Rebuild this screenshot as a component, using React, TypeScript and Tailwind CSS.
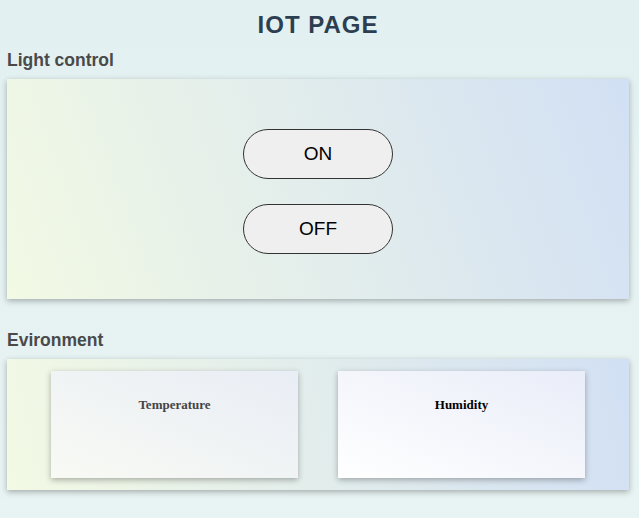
import React from 'react';

const sans = { fontFamily: '"Liberation Sans", Arial, sans-serif' };

function PillButton({ label }: { label: string }) {
  return (
    <button className="w-[150px] h-[50px] rounded-full border border-[#333] bg-[#efefef] text-[19px] text-black font-['Liberation_Sans',Arial,sans-serif]">
      {label}
    </button>
  );
}

function SensorCard({ title, color, bg }: { title: string; color: string; bg: string }) {
  return (
    <div className={`w-[247px] h-[107px] shadow-[0_2px_6px_rgba(0,0,0,0.3)] pt-[26px] text-center ${bg}`}>
      <div className={`text-[13px] leading-[16px] font-bold font-['Liberation_Serif','Times_New_Roman',serif] ${color}`}>{title}</div>
    </div>
  );
}

export default function App() {
  return (
    <div className="min-h-[518px] bg-gradient-to-b from-[#e3f0f1] to-[#e8f4f3] pl-[7px] pr-[10px] pt-[10px] pb-[28px]" style={sans}>
      <h1 className="text-center text-[24px] leading-[30px] font-bold text-[#2c3e50] tracking-[1px]">IOT PAGE</h1>

      <h2 className="mt-[10px] text-[17.5px] leading-[20px] font-bold text-[#4a4a4a]">Light control</h2>
      <div className="mt-[9px] h-[220px] bg-[linear-gradient(70deg,#f2f9e4,#d2e0f4)] shadow-[0_2px_6px_rgba(0,0,0,0.3)] flex flex-col items-center pt-[50px] gap-[25px]">
        <PillButton label="ON" />
        <PillButton label="OFF" />
      </div>

      <h2 className="mt-[31px] text-[17.5px] leading-[20px] font-bold text-[#4a4a4a]">Evironment</h2>
      <div className="mt-[9px] bg-[linear-gradient(78deg,#f2f9e4,#d2e0f4)] shadow-[0_2px_6px_rgba(0,0,0,0.3)] py-3 flex justify-center gap-[40px]">
        <SensorCard title="Temperature" color="text-[#444]" bg="bg-[linear-gradient(to_top_right,#f8faf4,#e9edf5)]" />
        <SensorCard title="Humidity" color="text-black" bg="bg-[linear-gradient(to_top_right,#ffffff,#e9edf8)]" />
      </div>
    </div>
  );
}
